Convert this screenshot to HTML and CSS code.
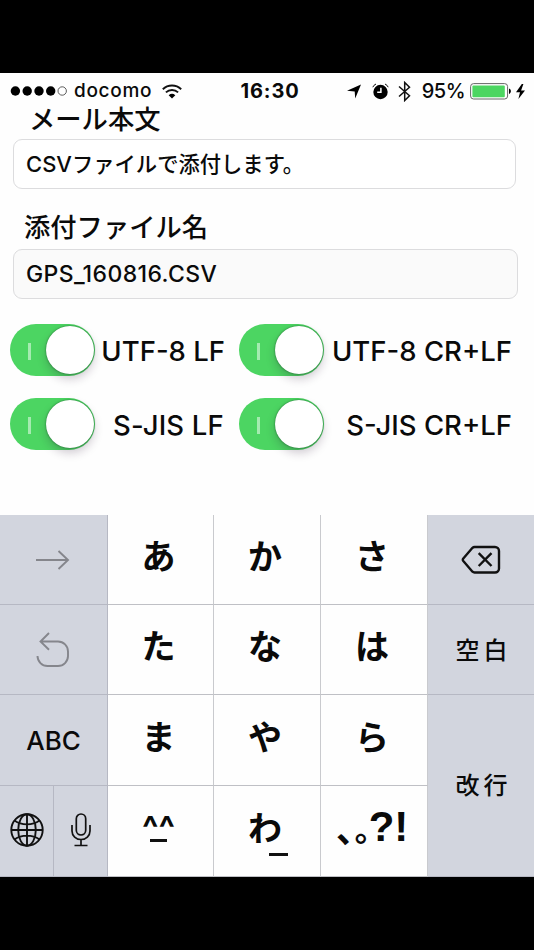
FILE: index.html
```
<!DOCTYPE html>
<html lang="ja">
<head>
  <meta charset="UTF-8">
  <title>メール</title>
  <link rel="stylesheet" href="styles.css">
</head>
<body>
  <div class="screen">
    <div class="status">
      <div class="status-left">
        <svg class="signal" width="58" height="12" viewBox="0 0 58 12">
          <circle cx="5.4" cy="6" r="4.7"/>
          <circle cx="17.2" cy="6" r="4.7"/>
          <circle cx="29" cy="6" r="4.7"/>
          <circle cx="40.7" cy="6" r="4.7"/>
          <circle cx="52.2" cy="6" r="4.2" fill="none" stroke="#333" stroke-width=".8"/>
        </svg>
        <span class="carrier">docomo</span>
        <svg class="wifi" width="20" height="15" viewBox="0 0 20 15">
          <path d="M.8 5.2a13.4 13.4 0 0 1 18.4 0M3.9 8.4a9 9 0 0 1 12.2 0" fill="none" stroke="#111" stroke-width="1.9"/>
          <path d="M6.7 11.2a5 5 0 0 1 6.6 0L10 14.6z"/>
        </svg>
      </div>
      <span class="time">16:30</span>
      <div class="status-right">
        <svg class="location" width="14" height="15" viewBox="0 0 14 15">
          <path d="M14 .5L8.200 14.500 7.700 7.500 0 6.800z"/>
        </svg>
        <svg class="alarm" width="17" height="17" viewBox="0 0 17 17">
          <circle cx="8.500" cy="9" r="7.200"/>
          <path d="M.8 4.200A6 6 0 0 1 4 1M13 1A6 6 0 0 1 16.200 4.200" fill="none" stroke="#111" stroke-width="1"/>
          <path d="M8.900 4.700v4.600H5.200" fill="none" stroke="#fff" stroke-width="1.500"/>
        </svg>
        <svg class="bluetooth" width="13" height="21" viewBox="0 0 13 21">
          <path d="M1 5.500l10.500 9.300L6.700 19.500V1.500l4.800 4.700L1 15.500" fill="none" stroke="#111" stroke-width="1.500"/>
        </svg>
        <span class="percent">95%</span>
        <svg class="battery" width="42" height="17" viewBox="0 0 42 17">
          <rect x=".6" y=".6" width="37" height="15.4" rx="3" fill="#fff" stroke="#666" stroke-width="1"/>
          <rect x="2.4" y="2.4" width="32.4" height="11.8" rx="1" fill="#4cd661"/>
          <path d="M39 5.600c2.500.8 2.500 4.600 0 5.400z"/>
        </svg>
        <svg class="bolt" width="9" height="15" viewBox="0 0 9 15">
          <path d="M5.800 0L0 8.300h4L2.400 15 9 6.400H5.100L7.400 0z"/>
        </svg>
      </div>
    </div>

    <div class="form">
      <div class="label label-body">メール本文</div>
      <div class="input"><span class="latin">CSV</span>ファイルで添付します。</div>
      <div class="label label-file">添付ファイル名</div>
      <div class="input input-file"><span class="name">GPS_160816.CSV</span></div>

      <div class="options">
        <div class="switch"><i></i><b></b></div>
        <span class="option">UTF-8 LF</span>
        <div class="switch"><i></i><b></b></div>
        <span class="option wide">UTF-8 CR+LF</span>
        <div class="switch"><i></i><b></b></div>
        <span class="option sjis">S-JIS LF</span>
        <div class="switch"><i></i><b></b></div>
        <span class="option wide">S-JIS CR+LF</span>
      </div>
    </div>

    <div class="keyboard">
      <div class="key gray">
        <svg class="arrow" width="34" height="20" viewBox="0 0 34 20" fill="none" stroke="#85868c" stroke-width="1.9">
          <path d="M0 10h32M22.5 1l9.5 9-9.5 9"/>
        </svg>
      </div>
      <div class="key kana">あ</div>
      <div class="key kana">か</div>
      <div class="key kana">さ</div>
      <div class="key gray">
        <svg width="40" height="30" viewBox="0 0 40 30" fill="none" stroke="#111" stroke-width="2.4" stroke-linejoin="round">
          <path d="M13.5 2H34a4 4 0 0 1 4 4v17.500a4 4 0 0 1-4 4H13.500a3 3 0 0 1-2-.8L2.300 16a2 2 0 0 1 0-2.500L11.500 2.800a3 3 0 0 1 2-.8z"/>
          <path d="M17.700 8.200l12.800 12.800M30.500 8.200l-12.800 12.800"/>
        </svg>
      </div>

      <div class="key gray">
        <svg class="undo" width="34" height="36" viewBox="0 0 34 36" fill="none" stroke="#85868c" stroke-width="1.9">
          <path d="M13 1L4.500 9.500l8.500 8.300M4.500 9.500H22a10 10 0 0 1 10 10V24a10 10 0 0 1-10 10H11.500a10 10 0 0 1-10-10"/>
        </svg>
      </div>
      <div class="key kana">た</div>
      <div class="key kana">な</div>
      <div class="key kana">は</div>
      <div class="key gray word">空白</div>

      <div class="key gray abc">ABC</div>
      <div class="key kana">ま</div>
      <div class="key kana">や</div>
      <div class="key kana">ら</div>
      <div class="key gray word enter">改行</div>

      <div class="pair">
        <div class="key gray">
          <svg width="34" height="34" viewBox="0 0 34 34" fill="none" stroke="#111" stroke-width="1.9">
            <circle cx="17" cy="17" r="15.700"/>
            <ellipse cx="17" cy="17" rx="8.800" ry="15.700"/>
            <path d="M17 1v32M1 17h32M4.500 7.500c7 5.200 18 5.200 25 0M4.500 26.500c7-5.200 18-5.200 25 0"/>
          </svg>
        </div>
        <div class="key gray">
          <svg width="20" height="34" viewBox="0 0 20 34" fill="none" stroke="#111" stroke-width="1.700">
            <rect x="5.300" y="1" width="9.400" height="21" rx="4.700"/>
            <path d="M1 12v6a9 8.500 0 0 0 18 0v-6M10 26.500V32.500M3.500 32.500h13"/>
          </svg>
        </div>
      </div>
      <div class="key face"><span>^^</span><i></i></div>
      <div class="key kana wa">わ<i></i></div>
      <div class="key marks"><span class="ten">､</span><span class="maru">｡</span><span class="mark">?!</span></div>
    </div>
  </div>
</body>
</html>
```
FILE: styles.css
```
* {
  margin: 0;
  padding: 0;
  box-sizing: border-box;
}

body {
  height: 950px;
  padding-top: 73px;
  background: #000;
  color: #0a0a0a;
  font-family: Inter, "Noto Sans CJK JP", sans-serif;
  overflow: hidden;
}

svg {
  display: block;
  flex: none;
}

.screen {
  height: 804px;
  background: #fefefe;
  display: flex;
  flex-direction: column;
}

/* status bar */
.status {
  height: 33px;
  padding: 3px 9px 0 10px;
  display: grid;
  grid-template-columns: 1fr auto 1fr;
  align-items: center;
  white-space: nowrap;
}

.status-left, .status-right {
  display: flex;
  align-items: center;
}

.status-right {
  justify-content: flex-end;
}

.carrier {
  margin-left: 6px;
  font-size: 19px;
  font-weight: 500;
  letter-spacing: .7px;
  line-height: 20px;
}

.wifi {
  margin-left: 10px;
}

.time {
  font-size: 20px;
  font-weight: 700;
  letter-spacing: .9px;
  line-height: 20px;
  margin-left: 5px;
}

.alarm {
  margin-left: 11px;
}

.bluetooth {
  margin-left: 9px;
}

.percent {
  margin-left: 11px;
  font-size: 20px;
  font-weight: 500;
  letter-spacing: -.5px;
}

.battery {
  margin-left: 5px;
}

.bolt {
  margin-left: 4px;
}

/* form */
.form {
  height: 409px;
  padding-left: 13px;
}

.label {
  font-family: "Noto Sans CJK JP", sans-serif;
  font-size: 26.3px;
  font-weight: 500;
  line-height: 24px;
  white-space: nowrap;
}

.label-body {
  height: 33px;
  padding-left: 16px;
}

.label-file {
  height: 60px;
  padding: 25px 0 0 11px;
}

.input {
  width: 503px;
  height: 50px;
  padding-left: 12px;
  border: 1px solid #dcdcde;
  border-radius: 9px;
  background: #fff;
  font-size: 21.3px;
  font-weight: 500;
  line-height: 48px;
  white-space: nowrap;
}

.latin {
  font-size: 22px;
  letter-spacing: 0;
}

.input-file {
  width: 505px;
  background: #fafafa;
}

.name {
  font-size: 23px;
  letter-spacing: .4px;
}

.options {
  margin: 25px 0 0 -3px;
  display: grid;
  grid-template-columns: 85px 144px 85px 188px;
  grid-auto-rows: 52px;
  row-gap: 22px;
}

.switch {
  height: 52px;
  padding: 2px 1px 0 18px;
  border-radius: 26px;
  background: #4cd562;
  display: flex;
  justify-content: space-between;
}

.switch i {
  width: 3px;
  height: 17px;
  margin-top: 17px;
  background: #a5ebb0;
}

.switch b {
  width: 48px;
  height: 48px;
  border-radius: 50%;
  background: #fff;
  box-shadow: 0 0 2px rgba(0, 60, 20, .7), 0 5px 10px rgba(40, 20, 50, .22);
}

.option {
  font-size: 27.5px;
  font-weight: 500;
  line-height: 54px;
  text-align: right;
  padding-right: 14px;
  white-space: nowrap;
}

.sjis {
  letter-spacing: .2px;
  padding-right: 15px;
}

.wide {
  padding-right: 0;
}

/* keyboard */
.keyboard {
  flex: 1;
  display: grid;
  grid-template-columns: 108px 106px 107px 107px 107px;
  grid-template-rows: 90px 90px 91px 91px;
  overflow: hidden;
}

.key {
  display: flex;
  align-items: center;
  justify-content: center;
  border-right: 1px solid #c9cace;
  border-bottom: 1px solid #bfc0c5;
}

.gray {
  background: #d2d5de;
  border-color: #b6b8c3;
}

.kana {
  font-family: "Noto Sans CJK JP", sans-serif;
  font-size: 34px;
  font-weight: 700;
  line-height: 1;
  padding: 0 4px 9px 0;
}

.word {
  font-size: 24px;
  font-weight: 500;
  letter-spacing: 4px;
  padding: 0 0 3px 5px;
}

.abc {
  font-size: 26px;
  font-weight: 500;
}

.enter {
  grid-row: 3 / 5;
  grid-column: 5;
  padding-bottom: 5px;
}

.pair {
  display: grid;
  grid-template-columns: 54px 54px;
}

.pair svg {
  margin-bottom: 2px;
}

.arrow, .undo {
  margin-right: 1px;
}

.face {
  flex-direction: column;
  font-weight: 700;
  font-size: 34px;
  line-height: 34px;
  padding: 0 4px 10px 0;
}

.face i {
  width: 17px;
  height: 3px;
  margin-top: -6px;
  background: #111;
}

.wa {
  position: relative;
}

.wa i {
  position: absolute;
  left: 55px;
  top: 67px;
  width: 19px;
  height: 3px;
  background: #111;
}

.marks {
  font-family: "Noto Sans CJK JP", sans-serif;
  font-size: 36px;
  font-weight: 700;
  line-height: 40px;
  padding: 0 3px 9px 0;
}

.maru {
  font-size: 32px;
}

.mark {
  font-family: "Liberation Sans", sans-serif;
  font-size: 42px;
  margin-left: -2px;
}
```
